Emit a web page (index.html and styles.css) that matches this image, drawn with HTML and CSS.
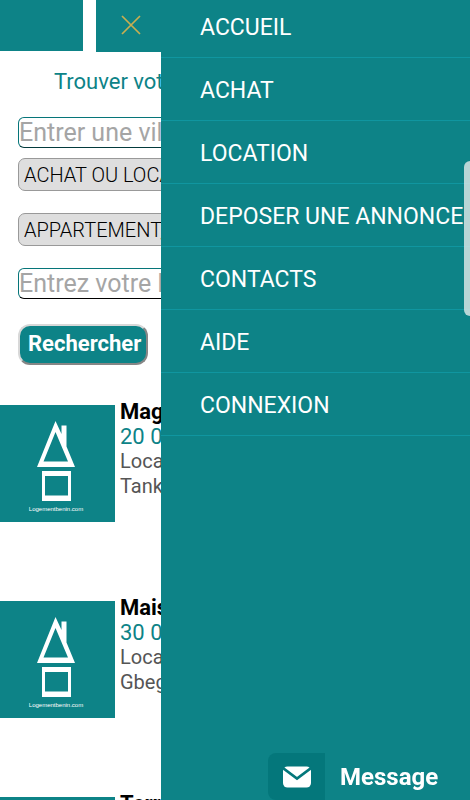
FILE: index.html
```html
<!DOCTYPE html>
<html lang="fr">
<head>
<meta charset="utf-8">
<meta name="viewport" content="width=device-width, initial-scale=1">
<title>Logementbenin.com</title>
<link rel="stylesheet" href="styles.css">
</head>
<body>
<svg class="defs" aria-hidden="true">
  <symbol id="house" viewBox="0 0 38 80">
    <path fill="#fff" fill-rule="evenodd" d="M18.5 0L24.500 13V4.500H29.500V25.500L38 46H0ZM18.500 11L6.500 40.500H31Z"/>
    <path fill="#fff" fill-rule="evenodd" d="M5 50H34V80H5ZM8 55V74.500H31V55Z"/>
  </symbol>
</svg>

<header class="topbar">
  <div class="brand"></div>
  <div class="toolbar">
    <button class="close" type="button" aria-label="Fermer le menu">
      <svg viewBox="0 0 20 20"><path d="M1 1L19 19M19 1L1 19" stroke="#c9ae50" stroke-width="1.700" fill="none"/></svg>
    </button>
  </div>
</header>

<main>
  <h1 class="title">Trouver votre logement</h1>
  <form class="search">
    <input class="field" type="text" placeholder="Entrer une ville" aria-label="Ville">
    <select class="choice" aria-label="Type d'offre"><option>ACHAT OU LOCATION</option></select>
    <select class="choice" aria-label="Type de bien"><option>APPARTEMENT, MAISON</option></select>
    <input class="field budget" type="text" placeholder="Entrez votre Prix" aria-label="Prix">
    <button class="submit" type="button">Rechercher</button>
  </form>

  <section class="listings">
    <article class="listing">
      <div class="thumb"><svg class="house"><use href="#house"/></svg><span>Logementbenin.com</span></div>
      <div class="info"><h2>Magasin</h2><p class="price">20 000</p><p>Location</p><p>Tankpè</p></div>
    </article>
    <article class="listing">
      <div class="thumb"><svg class="house"><use href="#house"/></svg><span>Logementbenin.com</span></div>
      <div class="info"><h2>Maison</h2><p class="price">30 000</p><p>Location</p><p>Gbegamey</p></div>
    </article>
    <article class="listing">
      <div class="thumb"><svg class="house"><use href="#house"/></svg></div>
      <div class="info"><h2>Terrain</h2></div>
    </article>
  </section>
</main>

<nav class="drawer" aria-label="Menu principal">
  <ul class="menu">
    <li><a href="#accueil">ACCUEIL</a></li>
    <li><a href="#achat">ACHAT</a></li>
    <li><a href="#location">LOCATION</a></li>
    <li><a href="#annonce">DEPOSER UNE ANNONCE</a></li>
    <li><a href="#contacts">CONTACTS</a></li>
    <li><a href="#aide">AIDE</a></li>
    <li><a href="#connexion">CONNEXION</a></li>
  </ul>
</nav>

<div class="edge-handle"></div>

<button class="message" type="button">
  <span class="message-icon">
    <svg viewBox="0 0 28 22">
      <rect x="0" y="0.500" width="28" height="21" rx="4.500" fill="#fff"/>
      <path d="M0 2L14 12.500L28 2" fill="none" stroke="#04777b" stroke-width="2.600"/>
    </svg>
  </span>
  <span class="message-label">Message</span>
</button>
</body>
</html>
```

FILE: styles.css
```css
:root {
  --teal: #0d8387;
  --line: #1096a0;
}

* {
  box-sizing: border-box;
}

html,
body {
  height: 100%;
  overflow: hidden;
}

body {
  margin: 0;
  background: #fff;
  color: #000;
  font-family: Roboto, "Liberation Sans", sans-serif;
}

button,
input,
select {
  font-family: inherit;
}

.defs {
  position: absolute;
  width: 0;
  height: 0;
}

.topbar {
  display: flex;
  gap: 13px;
  height: 52px;
}

.brand {
  width: 83px;
  height: 51px;
  background: var(--teal);
}

.toolbar {
  flex: 1;
  padding: 15px 25px;
  background: var(--teal);
}

.close {
  display: block;
  padding: 0;
  border: 0;
  background: none;
}

.close svg {
  display: block;
  width: 20px;
  height: 20px;
}

.title {
  margin: 0;
  padding: 14px 0 0 54px;
  color: var(--teal);
  font-size: 22px;
  line-height: 32px;
  font-weight: 400;
}

.search {
  display: flex;
  flex-direction: column;
  align-items: flex-start;
  gap: 22px;
  padding: 19px 18px 0;
}

.field {
  width: 100%;
  height: 31px;
  padding: 0;
  border: 1px solid #067579;
  border-bottom-color: #033b3d;
  border-radius: 6px;
  font-size: 25px;
}

.field:first-child {
  margin-bottom: -12px;
}

.field::placeholder {
  color: #a5a5a5;
}

.budget {
  border-bottom-color: #000;
}

.choice {
  width: 100%;
  height: 33px;
  padding: 0 5px;
  border: 1px solid #999;
  border-radius: 7px;
  background: #dedede;
  color: #000;
  font-size: 20px;
  font-weight: 300;
  appearance: none;
}

.submit {
  height: 41px;
  margin-top: 3px;
  padding: 0 5px 2px 8px;
  border: 2px solid;
  border-color: #d8d8d8 #868686 #868686 #d8d8d8;
  border-radius: 12px;
  background: var(--teal);
  color: #fff;
  font-size: 22px;
  font-weight: 700;
}

.listings {
  display: grid;
  gap: 79px;
  padding-top: 40px;
}

.listing {
  display: flex;
  gap: 5px;
  height: 117px;
}

.thumb {
  display: flex;
  flex-direction: column;
  align-items: center;
  width: 115px;
  height: 117px;
  padding: 16px 3px 0 0;
  background: var(--teal);
  color: #fff;
  font-family: "Liberation Sans", sans-serif;
  font-size: 6px;
  line-height: 17px;
}

.house {
  width: 38px;
  height: 80px;
}

.info {
  margin-top: -6px;
  color: #555;
  font-size: 20px;
  line-height: 25px;
}

.info h2,
.info p {
  margin: 0;
  font-size: inherit;
}

.info h2 {
  color: #000;
  font-size: 22px;
}

.info .price {
  color: var(--teal);
  font-size: 22px;
}

.drawer {
  position: fixed;
  inset: 0 0 0 161px;
  overflow: hidden;
  background: var(--teal);
}

.menu {
  margin: -5px 0 0;
  padding: 0;
  list-style: none;
}

.menu a {
  display: block;
  height: 63px;
  padding-left: 39px;
  border-bottom: 1px solid var(--line);
  color: #fff;
  font-size: 23px;
  line-height: 66px;
  text-decoration: none;
  white-space: nowrap;
}

.edge-handle {
  position: fixed;
  top: 161px;
  right: 0;
  width: 6px;
  height: 155px;
  border-radius: 8px 0 0 8px;
  background: rgb(222 232 232 / 82%);
}

.message {
  position: fixed;
  right: 0;
  bottom: 0;
  display: flex;
  align-items: center;
  gap: 15px;
  width: 202px;
  height: 47px;
  padding: 0;
  border: 0;
  background: none;
  color: #fff;
  font-size: 24px;
  font-weight: 700;
}

.message-icon {
  display: grid;
  place-items: center;
  width: 57px;
  height: 47px;
  border-radius: 8px 0 0 8px;
  background: #04777b;
}

.message-icon svg {
  width: 28px;
  height: 22px;
}
```
